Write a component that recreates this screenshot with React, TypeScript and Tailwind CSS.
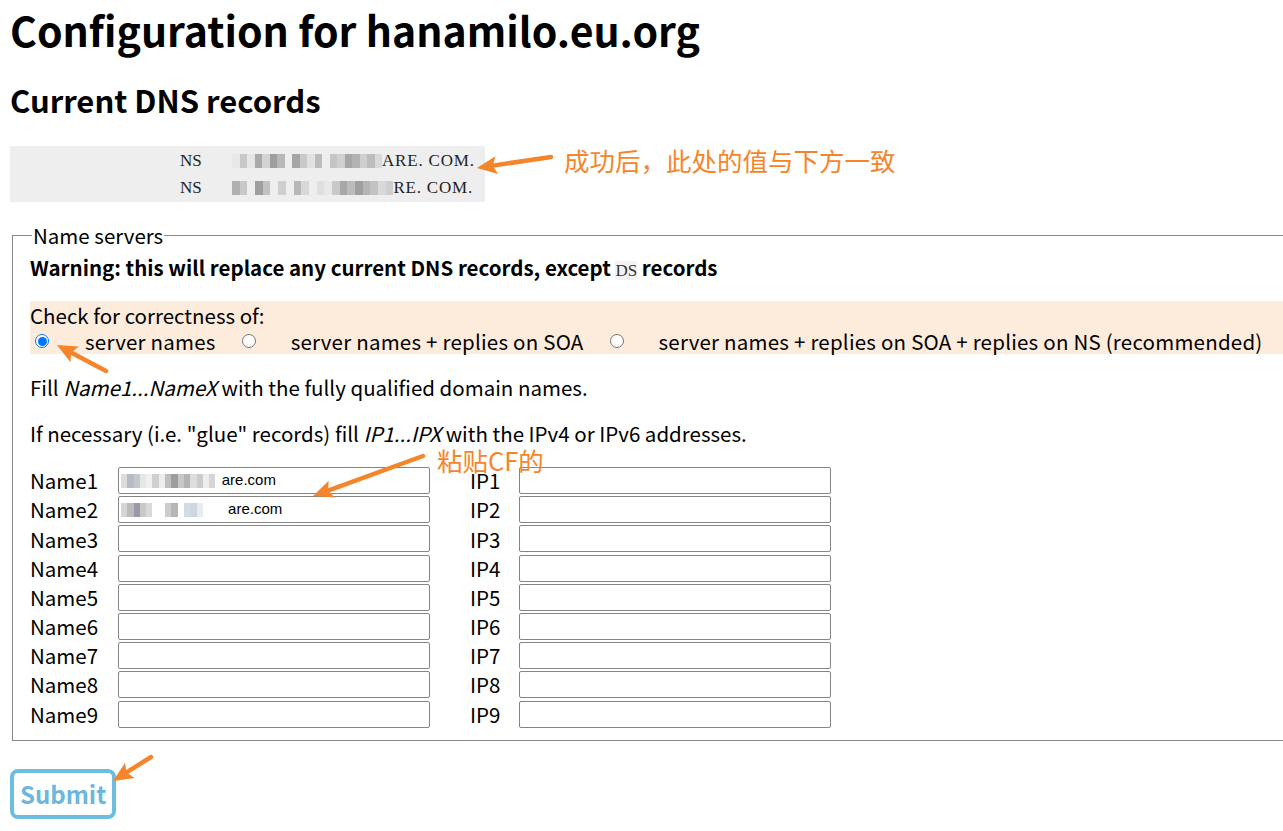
import React from 'react';

const font = { fontFamily: '"Noto Sans CJK SC", "Noto Sans", sans-serif' };

// grey blocks standing in for the blurred-out part of a host name
function Pixelated({ cells, w = 7 }: { cells: string[]; w?: number }) {
  return (
    <span className="inline-flex items-center align-middle blur-[0.6px]">
      {cells.map((c, i) => (
        <span key={i} className="inline-block h-[14px]" style={{ backgroundColor: c, width: w }} />
      ))}
    </span>
  );
}

const ns1 = ['#e8e8e8', '#c8c8c8', '#e6e6e6', '#a9a9a9', '#d3d3d3', '#9d9d9d', '#b8b8b8', '#eeeeee', '#a6a6a6', '#c9c9c9', '#e1e1e1', '#bcbcbc', '#eeeeee', '#c5c5c5', '#d0d0d0', '#a7a7a7', '#b3b3b3', '#cfcfcf', '#bdbdbd', '#d9d9d9'];
const ns2 = ['#b0b0b0', '#c8c8c8', '#eeeeee', '#9e9e9e', '#c2c2c2', '#eeeeee', '#cfcfcf', '#eeeeee', '#b7b7b7', '#d8d8d8', '#eeeeee', '#e0e0e0', '#e8e8e8', '#c9c9c9', '#a8a8a8', '#bbbbbb', '#9f9f9f', '#b5b5b5', '#c3c3c3', '#d9d9d9', '#cfcfcf'];
const in1 = ['#dcdcdc', '#b7bcc4', '#c3c8cf', '#e6e6e6', '#f0f0f0', '#cfcfcf', '#ededed', '#bfbfbf', '#9d9d9d', '#c8c8c8', '#b3b3b3', '#dddddd', '#cccccc', '#eeeeee', '#d6d6d6', '#ffffff'];
const in2 = ['#d5d5d5', '#bcbcbc', '#9a9aa6', '#c9c9c9', '#d9d9d9', '#ffffff', '#ffffff', '#c9cdd2', '#b6b6b6', '#ffffff', '#d4dbe2', '#cfd6dd', '#e7ecf0', '#ffffff', '#ffffff', '#ffffff', '#ffffff'];

function Radio({ checked }: { checked?: boolean }) {
  return checked ? (
    <span className="inline-flex h-[14px] w-[14px] items-center justify-center rounded-full border border-[#0075ff] bg-white">
      <span className="h-[9px] w-[9px] rounded-full bg-[#0075ff]" />
    </span>
  ) : (
    <span className="inline-block h-[14px] w-[14px] rounded-full border border-[#767676] bg-white" />
  );
}

function Field({ children }: { children?: React.ReactNode }) {
  return (
    <div className="flex h-[27px] w-[312px] items-center overflow-hidden whitespace-nowrap rounded-[2px] border border-[#858585] bg-white pl-[2px] text-[15px]" style={{ fontFamily: '"Liberation Sans", Arial, sans-serif' }}>
      {children}
    </div>
  );
}

function Arrow({ x1, y1, x2, y2 }: { x1: number; y1: number; x2: number; y2: number }) {
  const a = Math.atan2(y2 - y1, x2 - x1);
  const len = 20;
  const w = 9;
  const bx = x2 - len * Math.cos(a);
  const by = y2 - len * Math.sin(a);
  const px = -Math.sin(a) * w;
  const py = Math.cos(a) * w;
  const sx = x2 - (len - 4) * Math.cos(a);
  const sy = y2 - (len - 4) * Math.sin(a);
  return (
    <g>
      <line x1={x1} y1={y1} x2={sx} y2={sy} stroke="#f5852a" strokeWidth={4.5} strokeLinecap="round" />
      <polygon points={`${x2},${y2} ${bx + px},${by + py} ${sx},${sy} ${bx - px},${by - py}`} fill="#f5852a" />
    </g>
  );
}

export default function App() {
  const rows = [1, 2, 3, 4, 5, 6, 7, 8, 9];
  return (
    <div className="relative h-[831px] w-[1283px] overflow-hidden bg-white px-[10px] text-black" style={font}>
      <h1 className="pt-[3px] text-[41px] font-bold leading-[52px]">Configuration for hanamilo.eu.org</h1>
      <h2 className="mt-[25px] text-[31px] font-bold leading-[40px]">Current DNS records</h2>

      <div className="mt-[26px] w-[475px] whitespace-nowrap bg-[#eeeeee] py-[1px] text-[17px] leading-[27px] text-[#222]" style={{ fontFamily: '"Liberation Serif", serif' }}>
        <div className="flex items-center pl-[170px]">
          <span className="w-[52px]">NS</span>
          <Pixelated cells={ns1} w={7.5} />
          <span className="tracking-[0.8px]">ARE. COM.</span>
        </div>
        <div className="flex items-center pl-[170px]">
          <span className="w-[52px]">NS</span>
          <Pixelated cells={ns2} w={7.7} />
          <span className="tracking-[0.8px]">RE. COM.</span>
        </div>
      </div>

      <fieldset className="mt-[23px] ml-[2px] w-[1300px] border border-[#8a8a8a] px-[17px] pb-[12px] text-[20.5px]">
        <legend className="ml-[2px] px-[1px] text-[20.5px] leading-[20px]">Name servers</legend>
        <p className="mt-[8px] font-bold leading-[28px]">
          Warning: this will replace any current DNS records, except{' '}
          <code className="bg-[#f3f3f3] text-[17px] font-normal text-[#333]" style={{ fontFamily: '"Liberation Serif", serif' }}>DS</code> records
        </p>

        <div className="mt-[16px] w-[1265px] bg-[#fdebdc] pt-[1px] leading-[26px]">
          <div>Check for correctness of:</div>
          <div className="flex items-center whitespace-nowrap tracking-[0.22px]">
            <span className="ml-[5px] mr-[36px] inline-flex"><Radio checked /></span>
            <span>server names</span>
            <span className="ml-[26px] mr-[35px] inline-flex"><Radio /></span>
            <span>server names + replies on SOA</span>
            <span className="ml-[26px] mr-[35px] inline-flex"><Radio /></span>
            <span>server names + replies on SOA + replies on NS (recommended)</span>
          </div>
        </div>

        <p className="mt-[20px] leading-[26px]">
          Fill <i>Name1...NameX</i> with the fully qualified domain names.
        </p>
        <p className="mt-[20px] leading-[26px]">
          If necessary (i.e. "glue" records) fill <i>IP1...IPX</i> with the IPv4 or IPv6 addresses.
        </p>

        <div className="mt-[21px] flex flex-col gap-[2.2px]">
          {rows.map((n) => (
            <div key={n} className="flex h-[27px] items-center">
              <span className="w-[88px]">Name{n}</span>
              <Field>
                {n === 1 && (
                  <>
                    <Pixelated cells={in1} w={6.3} />
                    <span>are.com</span>
                  </>
                )}
                {n === 2 && (
                  <>
                    <Pixelated cells={in2} w={6.3} />
                    <span>are.com</span>
                  </>
                )}
              </Field>
              <span className="ml-[40px] w-[49px]">IP{n}</span>
              <Field />
            </div>
          ))}
        </div>
      </fieldset>

      <button className="mt-[28px] rounded-[8px] border-[4px] border-[#6dbde0] bg-white px-[6px] text-[24px] font-bold leading-[42px] text-[#6db6dc]" style={font}>
        Submit
      </button>

      <div className="absolute left-[564px] top-[143px] text-[25.5px] leading-[34px] text-[#f5852a]">成功后，此处的值与下方一致</div>
      <div className="absolute left-[437px] top-[443px] text-[25.5px] leading-[34px] text-[#f5852a]">粘贴CF的</div>

      <svg className="pointer-events-none absolute left-0 top-0" width="1283" height="831">
        <Arrow x1={551} y1={157} x2={477} y2={168} />
        <Arrow x1={106} y1={371} x2={57} y2={345} />
        <Arrow x1={423} y1={456} x2={313} y2={496} />
        <Arrow x1={151} y1={757} x2={113} y2={781} />
      </svg>
    </div>
  );
}
